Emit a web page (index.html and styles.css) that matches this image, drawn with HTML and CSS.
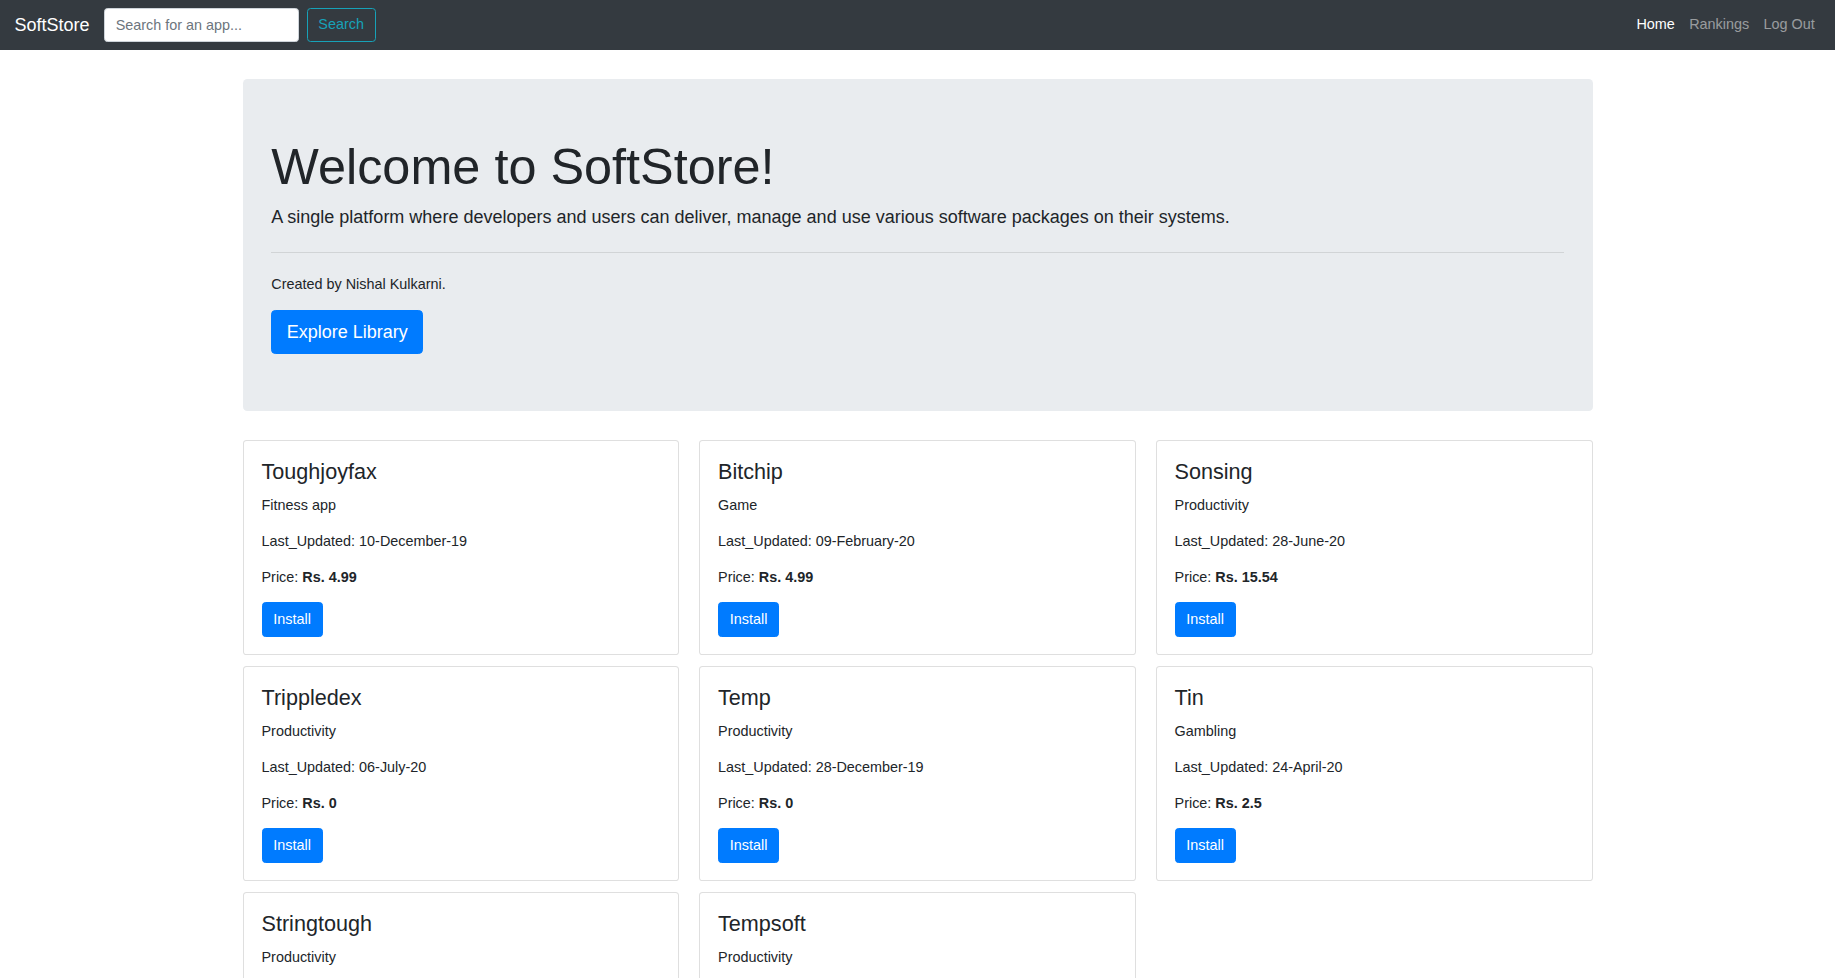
FILE: index.html
```html
<!DOCTYPE html>
<html lang="en">
<head>
<meta charset="utf-8">
<title>SoftStore</title>
<link rel="stylesheet" href="styles.css">
</head>
<body>
<nav class="navbar">
  <a class="brand" href="#">SoftStore</a>
  <form class="search">
    <input class="search-input" type="search" placeholder="Search for an app...">
    <button class="search-btn" type="button">Search</button>
  </form>
  <ul class="nav-links">
    <li><a class="nav-link active" href="#">Home</a></li>
    <li><a class="nav-link" href="#">Rankings</a></li>
    <li><a class="nav-link" href="#">Log Out</a></li>
  </ul>
</nav>

<main class="container">
  <section class="jumbotron">
    <h1 class="display">Welcome to SoftStore!</h1>
    <p class="lead">A single platform where developers and users can deliver, manage and use various software packages on their systems.</p>
    <hr class="divider">
    <p class="credit">Created by Nishal Kulkarni.</p>
    <div class="cta"><a class="btn btn-lg" href="#">Explore Library</a></div>
  </section>

  <div class="app-grid">
    <div class="card">
      <h4 class="card-title">Toughjoyfax</h4>
      <p class="card-text">Fitness app</p>
      <p class="card-text">Last_Updated: 10-December-19</p>
      <p class="card-text card-price">Price: <b>Rs. 4.99</b></p>
      <div class="card-action"><a class="btn" href="#">Install</a></div>
    </div>
    <div class="card">
      <h4 class="card-title">Bitchip</h4>
      <p class="card-text">Game</p>
      <p class="card-text">Last_Updated: 09-February-20</p>
      <p class="card-text card-price">Price: <b>Rs. 4.99</b></p>
      <div class="card-action"><a class="btn" href="#">Install</a></div>
    </div>
    <div class="card">
      <h4 class="card-title">Sonsing</h4>
      <p class="card-text">Productivity</p>
      <p class="card-text">Last_Updated: 28-June-20</p>
      <p class="card-text card-price">Price: <b>Rs. 15.54</b></p>
      <div class="card-action"><a class="btn" href="#">Install</a></div>
    </div>
    <div class="card">
      <h4 class="card-title">Trippledex</h4>
      <p class="card-text">Productivity</p>
      <p class="card-text">Last_Updated: 06-July-20</p>
      <p class="card-text card-price">Price: <b>Rs. 0</b></p>
      <div class="card-action"><a class="btn" href="#">Install</a></div>
    </div>
    <div class="card">
      <h4 class="card-title">Temp</h4>
      <p class="card-text">Productivity</p>
      <p class="card-text">Last_Updated: 28-December-19</p>
      <p class="card-text card-price">Price: <b>Rs. 0</b></p>
      <div class="card-action"><a class="btn" href="#">Install</a></div>
    </div>
    <div class="card">
      <h4 class="card-title">Tin</h4>
      <p class="card-text">Gambling</p>
      <p class="card-text">Last_Updated: 24-April-20</p>
      <p class="card-text card-price">Price: <b>Rs. 2.5</b></p>
      <div class="card-action"><a class="btn" href="#">Install</a></div>
    </div>
    <div class="card">
      <h4 class="card-title">Stringtough</h4>
      <p class="card-text">Productivity</p>
      <p class="card-text">Last_Updated: 15-March-20</p>
      <p class="card-text card-price">Price: <b>Rs. 0</b></p>
      <div class="card-action"><a class="btn" href="#">Install</a></div>
    </div>
    <div class="card">
      <h4 class="card-title">Tempsoft</h4>
      <p class="card-text">Productivity</p>
      <p class="card-text">Last_Updated: 02-May-20</p>
      <p class="card-text card-price">Price: <b>Rs. 0</b></p>
      <div class="card-action"><a class="btn" href="#">Install</a></div>
    </div>
  </div>
</main>
</body>
</html>
```

FILE: styles.css
```css
*, *::before, *::after { box-sizing: border-box; }

html { font-size: 14.4px; }

body {
  margin: 0;
  font-family: "Liberation Sans", Arial, sans-serif;
  font-size: 14.4px;
  line-height: 1.5;
  color: #212529;
  background: #fff;
}

a { text-decoration: none; }

/* Navbar */
.navbar {
  display: flex;
  align-items: center;
  background: #343a40;
  padding: 7.2px 13px 7.2px 14.4px;
}
.brand {
  color: #fff;
  font-size: 18px;
  line-height: 27px;
  margin-right: 14.4px;
  white-space: nowrap;
}
.search {
  display: flex;
  align-items: center;
  margin: 0;
}
.search-input {
  width: 195.5px;
  height: 34.4px;
  padding: 5.4px 10.8px;
  font-family: inherit;
  font-size: 14.4px;
  line-height: 1.5;
  color: #495057;
  background: #fff;
  border: 1px solid #ced4da;
  border-radius: 3.6px;
  margin-right: 7.2px;
  outline: none;
}
.search-input::placeholder { color: #6c757d; }
.search-btn {
  height: 34.4px;
  padding: 5.4px 10.8px;
  font-family: inherit;
  font-size: 14.4px;
  line-height: 1.5;
  color: #17a2b8;
  background: transparent;
  border: 1px solid #17a2b8;
  border-radius: 3.6px;
}
.nav-links {
  display: flex;
  list-style: none;
  margin: 0 0 0 auto;
  padding: 0;
}
.nav-link {
  display: block;
  padding: 7.2px 7.2px;
  color: rgba(255, 255, 255, 0.5);
}
.nav-link.active { color: #fff; }

/* Container */
.container {
  width: 1350px;
  margin: 28.8px auto 0;
}

/* Jumbotron */
.jumbotron {
  background: #e9ecef;
  border-radius: 4.32px;
  padding: 57.6px 28.8px;
  margin-bottom: 28.8px;
}
.display {
  margin: 0 0 7.2px;
  font-size: 50.4px;
  font-weight: 300;
  line-height: 1.2;
}
.lead {
  margin: 0 0 14.4px;
  font-size: 18px;
  font-weight: 300;
}
.divider {
  margin: 20.4px 0 21.6px;
  height: 0;
  border: 0;
  border-top: 1px solid rgba(0, 0, 0, 0.1);
}
.credit { margin: 0 0 14.4px; }
.cta { display: flex; }

.btn {
  display: inline-block;
  padding: 5.4px 10.8px;
  font-size: 14.4px;
  line-height: 1.5;
  color: #fff;
  background: #007bff;
  border: 1px solid #007bff;
  border-radius: 3.6px;
}
.btn-lg {
  padding: 7.2px 14.4px;
  font-size: 18px;
  border-radius: 4.32px;
}

/* Cards */
.app-grid {
  display: grid;
  grid-template-columns: repeat(3, 1fr);
  column-gap: 19.6px;
  row-gap: 11.3px;
}
.card {
  border: 1px solid rgba(0, 0, 0, 0.125);
  border-radius: 3.6px;
  padding: 18px 18px 17px;
  background: #fff;
}
.card-title {
  margin: 0 0 10.4px;
  font-size: 21.6px;
  font-weight: 500;
  line-height: 1.2;
}
.card-text { margin: 0 0 14.4px; }
.card-price { margin-bottom: 13.4px; }
.card-text b { font-weight: bold; }
.card-action { display: flex; }
```
